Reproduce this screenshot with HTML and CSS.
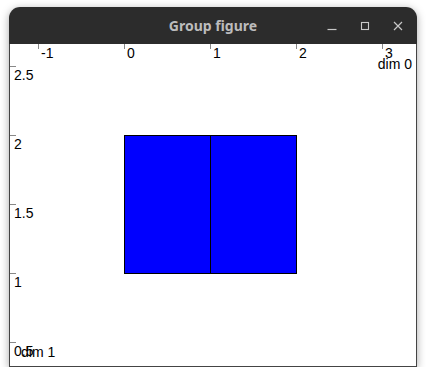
FILE: index.html
```html
<!DOCTYPE html>
<html>
	<head>
		<meta charset="utf-8">
		<title>Group figure</title>
		<link rel="stylesheet" href="styles.css">
	</head>
	<body>
		<div class="window">
			<!-- 标题栏 -->
			<div class="titlebar">
				<span class="title">Group figure</span>
				<div class="controls">
					<svg class="btn" width="14" height="14" viewBox="0 0 14 14"><path d="M2.5 10.5h9" stroke="#c8c8c8" stroke-width="1.2"/></svg>
					<svg class="btn" width="14" height="14" viewBox="0 0 14 14"><rect x="3.5" y="3.5" width="7" height="7" fill="none" stroke="#c8c8c8" stroke-width="1.1"/></svg>
					<svg class="btn" width="14" height="14" viewBox="0 0 14 14"><path d="M3 3l8 8M11 3l-8 8" stroke="#c8c8c8" stroke-width="1.2"/></svg>
				</div>
			</div>

			<!-- 图形区域 -->
			<div class="canvas">
				<svg class="plot" width="406" height="322" viewBox="10 44 406 322">
					<!-- 刻度 -->
					<g class="ticks">
						<path d="M38.5 44v5M124.5 44v5M210.5 44v5M296.5 44v5M382.5 44v5"/>
						<path d="M10 66.5h6M10 135.5h6M10 204.5h6M10 273.5h6M10 342.5h6"/>
					</g>
					<g class="labels">
						<text x="41" y="58">-1</text>
						<text x="127" y="58">0</text>
						<text x="213" y="58">1</text>
						<text x="299" y="58">2</text>
						<text x="385" y="58">3</text>
						<text x="14" y="80">2.5</text>
						<text x="14" y="149">2</text>
						<text x="14" y="218">1.5</text>
						<text x="14" y="287">1</text>
						<text x="14" y="356">0.5</text>
						<text x="412" y="69" text-anchor="end">dim 0</text>
						<text x="21" y="357">dim 1</text>
					</g>
					<!-- 方块 -->
					<rect class="cell" x="124.5" y="135.5" width="86" height="138"/>
					<rect class="cell" x="210.5" y="135.5" width="86" height="138"/>
				</svg>
			</div>
		</div>
	</body>
</html>
```

FILE: styles.css
```css
* {
    margin: 0;
    padding: 0;
}

body {
    background: #fff;
    font-family: "Liberation Sans", Arial, sans-serif;
}

.window {
    width: 408px;
    margin: 7px 0 0 9px;
    border-radius: 11px 11px 0 0;
    box-shadow: 0 2px 9px rgba(0, 0, 0, 0.35);
}

.titlebar {
    position: relative;
    display: flex;
    align-items: center;
    justify-content: center;
    height: 37px;
    background: #2c2c2c;
    border-radius: 11px 11px 0 0;
}

.title {
    color: #bcbcbc;
    font-family: "Noto Sans", "DejaVu Sans", sans-serif;
    font-size: 14px;
    font-weight: bold;
}

.controls {
    position: absolute;
    top: 12px;
    right: 12px;
    display: flex;
    gap: 19px;
}

.btn {
    display: block;
}

.canvas {
    height: 322px;
    background: #fff;
    border: 1px solid #444;
    border-top: none;
}

.plot {
    display: block;
}

.ticks path {
    stroke: #888;
    stroke-width: 1;
    fill: none;
}

.labels text {
    font-family: "Liberation Sans", Arial, sans-serif;
    font-size: 14px;
    fill: #000;
}

.cell {
    fill: #0000ff;
    stroke: #000;
    stroke-width: 1;
}
```
